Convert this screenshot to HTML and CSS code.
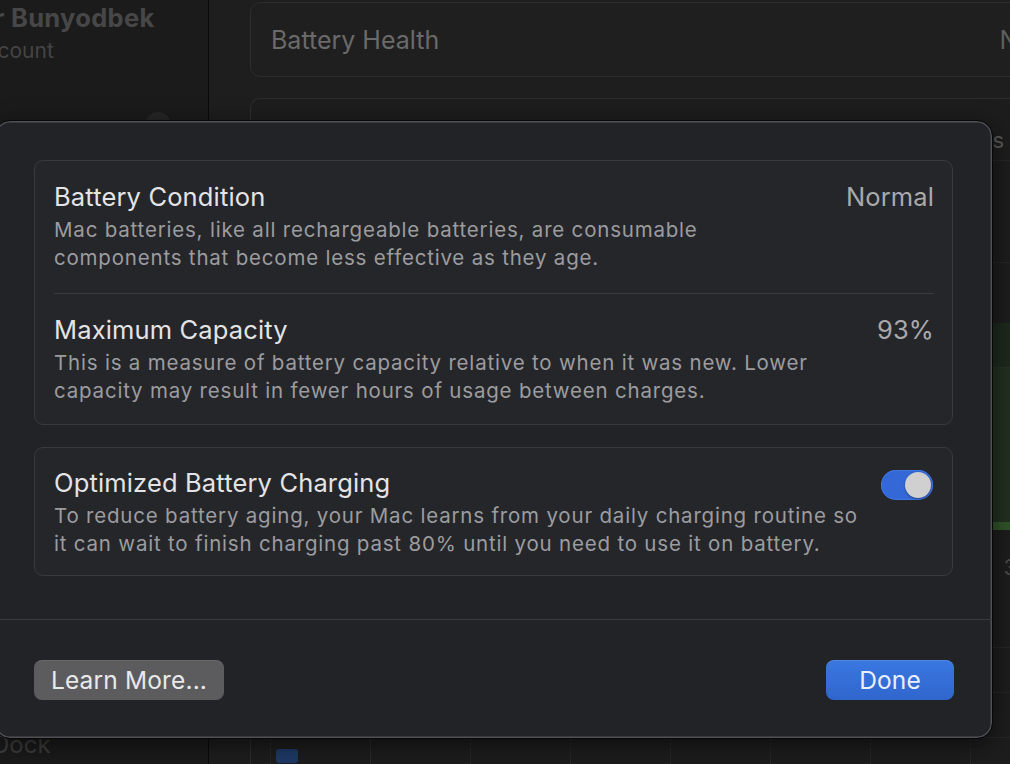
FILE: index.html
```html
<!DOCTYPE html>
<html lang="en">
<head>
<meta charset="utf-8">
<title>Battery Health</title>
<link rel="stylesheet" href="styles.css">
</head>
<body>
<div class="app">
  <aside class="sidebar">
    <div class="user-name">r Bunyodbek</div>
    <div class="user-sub">Account</div>
    <div class="side-dot"></div>
    <div class="side-fill"></div>
    <div class="side-item">Dock</div>
  </aside>
  <main class="pane">
    <div class="row-card">
      <span class="row-label">Battery Health</span>
      <span class="row-value">Normal</span>
    </div>
    <div class="chart-card">
      <div class="chart-head"><span class="chart-tab">Last 24 Hours</span></div>
      <div class="chart-line"></div>
      <div class="chart-space-a"></div>
      <div class="chart-bars">
        <div class="bars-top"></div>
        <div class="bars-mid">
          <span class="bar"></span><span class="bar"></span><span class="bar"></span>
        </div>
        <div class="bars-base"></div>
      </div>
      <div class="chart-label"><span>3</span></div>
      <div class="chart-rows">
        <div class="chart-row"></div>
        <div class="chart-row"></div>
      </div>
      <div class="chart-bottom">
        <span class="grid-col dashed"><i class="legend-sq"></i></span>
        <span class="grid-col solid"></span>
        <span class="grid-col dashed"></span>
        <span class="grid-col dashed"></span>
        <span class="grid-col dashed"></span>
        <span class="grid-col dashed"></span>
        <span class="grid-col dashed"></span>
        <span class="grid-col dashed"></span>
      </div>
    </div>
  </main>
</div>

<div class="dialog">
  <div class="dialog-body">
    <section class="card">
      <div class="item">
        <div class="item-text">
          <div class="item-title">Battery Condition</div>
          <div class="item-desc">Mac batteries, like all rechargeable batteries, are consumable<br>components that become less effective as they age.</div>
        </div>
        <div class="item-value">Normal</div>
      </div>
      <div class="item item-second">
        <div class="item-text">
          <div class="item-title">Maximum Capacity</div>
          <div class="item-desc">This is a measure of battery capacity relative to when it was new. Lower<br>capacity may result in fewer hours of usage between charges.</div>
        </div>
        <div class="item-value">93%</div>
      </div>
    </section>
    <section class="card">
      <div class="item item-toggle">
        <div class="item-text">
          <div class="item-title">Optimized Battery Charging</div>
          <div class="item-desc">To reduce battery aging, your Mac learns from your daily charging routine so<br>it can wait to finish charging past 80% until you need to use it on battery.</div>
        </div>
        <div class="switch" role="switch" aria-checked="true"><span class="knob"></span></div>
      </div>
    </section>
  </div>
  <div class="dialog-footer">
    <button class="btn btn-secondary">Learn More...</button>
    <button class="btn btn-primary">Done</button>
  </div>
</div>
</body>
</html>
```

FILE: styles.css
```css
* { box-sizing: border-box; }

html, body {
  margin: 0;
  padding: 0;
}

body {
  width: 1010px;
  height: 764px;
  overflow: hidden;
  position: relative;
  background: #1e1e1e;
  font-family: "Inter", "Noto Sans", "Liberation Sans", sans-serif;
  -webkit-font-smoothing: antialiased;
}

/* ---------- background window ---------- */
.app {
  display: flex;
  height: 764px;
}

.sidebar {
  width: 209px;
  flex: none;
  background: #1b1b1b;
  border-right: 1px solid #0b0b0b;
  display: flex;
  flex-direction: column;
  overflow: hidden;
}

.user-name {
  margin: 3px 0 0 -6px;
  font-size: 25.5px;
  font-weight: 700;
  line-height: 30px;
  letter-spacing: 0.3px;
  color: #474748;
  white-space: nowrap;
}

.user-sub {
  margin: 4px 0 0 -29px;
  font-size: 21px;
  line-height: 28px;
  color: #444445;
  white-space: nowrap;
}

.side-dot {
  margin: 47px 0 0 145px;
  width: 26px;
  height: 26px;
  border-radius: 50%;
  background: #262627;
}

.side-fill { flex: 1; }

.side-item {
  margin: 0 0 4px -8px;
  font-size: 24px;
  line-height: 30px;
  color: #3e3e3f;
}

.pane {
  flex: 1;
  padding: 2px 0 0 41px;
  display: flex;
  flex-direction: column;
  gap: 21px;
  overflow: hidden;
}

.row-card {
  height: 75px;
  margin-right: -40px;
  border: 1px solid #2d2d2e;
  border-radius: 10px;
  background: #1f1f1f;
  display: flex;
  align-items: center;
  justify-content: space-between;
  padding: 0 20px;
}

.row-label {
  font-size: 25px;
  color: #6a6a6b;
}

.row-value {
  font-size: 25px;
  color: #5e5e5f;
  margin-right: -56px;
}

.chart-card {
  flex: 1;
  margin-right: -40px;
  border: 1px solid #2d2d2e;
  border-bottom: none;
  border-radius: 10px 10px 0 0;
  background: #1d1d1d;
  display: flex;
  flex-direction: column;
}

.chart-head {
  height: 62px;
  display: flex;
  align-items: center;
  justify-content: flex-end;
  padding-right: 45px;
  border-bottom: 1px solid #262626;
}

.chart-tab {
  font-size: 22px;
  color: #59595a;
  padding-top: 20px;
}

.chart-line {
  height: 102px;
  border-bottom: 1px solid #262626;
}

.chart-space-a { height: 60px; }

.chart-bars {
  height: 207px;
  display: flex;
  flex-direction: column;
  background: #1c261c;
}

.bars-top {
  height: 45px;
  background: #1d291c;
  border-bottom: 1px solid #243223;
}

.bars-mid {
  flex: 1;
  display: flex;
  justify-content: flex-end;
  align-items: flex-end;
  gap: 3px;
  padding: 0 0 19px 0;
  background: #213020;
}

.bar {
  width: 5px;
  height: 93px;
  border-radius: 3px 3px 0 0;
  background: #365a2f;
}

.bars-base {
  height: 8px;
  background: #2f5428;
}

.chart-label {
  height: 118px;
  display: flex;
  justify-content: flex-end;
  padding: 24px 32px 0 0;
  font-size: 22px;
  color: #4a4a4b;
  border-bottom: 1px solid #262626;
}

.chart-rows { display: flex; flex-direction: column; }

.chart-row {
  height: 45px;
  border-bottom: 1px solid #262626;
}

.chart-bottom {
  flex: 1;
  display: flex;
  padding-left: 19px;
}

.grid-col {
  width: 100px;
  flex: none;
  border-left: 1px dashed #2a2a2a;
}

.grid-col.solid { border-left-style: solid; }

.legend-sq {
  display: block;
  width: 22px;
  height: 14px;
  margin: 11px 0 0 5px;
  border-radius: 3px;
  background: #1f3a68;
}

/* ---------- dialog ---------- */
.dialog {
  position: absolute;
  left: -6px;
  top: 120px;
  width: 999px;
  height: 619px;
  border-radius: 16px;
  background: #222327;
  border: 1px solid #070708;
  box-shadow: inset 0 0 0 1.5px #505155, 0 6px 24px rgba(0, 0, 0, 0.55);
  display: flex;
  flex-direction: column;
}

.dialog-body {
  padding: 39px 39px 41px 39px;
  display: flex;
  flex-direction: column;
  gap: 22px;
}

.card {
  border: 1px solid #393a3e;
  border-radius: 9px;
  background: #25262a;
  padding: 0 18px 0 19px;
}

.item {
  display: flex;
  justify-content: space-between;
  align-items: flex-start;
  padding: 20px 0 21px;
}

.item-second {
  border-top: 1px solid #3a3b3f;
  padding: 20px 0 19px;
}

.item-toggle {
  padding: 19px 1px 17px 0;
}

.item-title {
  font-size: 25.5px;
  line-height: 32px;
  color: #e4e4e6;
  margin-bottom: 3px;
  letter-spacing: 0.15px;
}

.item-desc {
  font-size: 20.5px;
  line-height: 28px;
  color: #9c9c9f;
  white-space: nowrap;
  letter-spacing: 0.8px;
}

.item-value {
  font-size: 25.5px;
  line-height: 32px;
  color: #a9a9ac;
  letter-spacing: 0.1px;
}

.switch {
  margin-top: 3px;
  width: 52px;
  height: 30px;
  border-radius: 15px;
  background: #3468d6;
  box-shadow: inset 0 0 0 1px #3f74de;
  display: flex;
  align-items: center;
  justify-content: flex-end;
  padding: 2px;
}

.knob {
  width: 26px;
  height: 26px;
  border-radius: 50%;
  background: #d0d0d0;
  box-shadow: 0 1px 2px rgba(0, 0, 0, 0.35);
}

.dialog-footer {
  margin-top: auto;
  border-top: 1px solid #3a3b3e;
  padding: 40px 38px 38px 39px;
  display: flex;
  justify-content: space-between;
  align-items: center;
}

.btn {
  height: 40px;
  border: none;
  border-radius: 8px;
  font-family: inherit;
  font-size: 24.5px;
  line-height: 40px;
  padding: 0;
  letter-spacing: 0.15px;
  cursor: default;
}

.btn-secondary {
  width: 190px;
  background: #5c5c5f;
  color: #e9e9ea;
  box-shadow: inset 0 1px 0 rgba(255, 255, 255, 0.08);
}

.btn-primary {
  width: 128px;
  background: linear-gradient(#3a77e1, #2f66cd);
  color: #e9effb;
  box-shadow: inset 0 1px 0 rgba(255, 255, 255, 0.12);
}
```
